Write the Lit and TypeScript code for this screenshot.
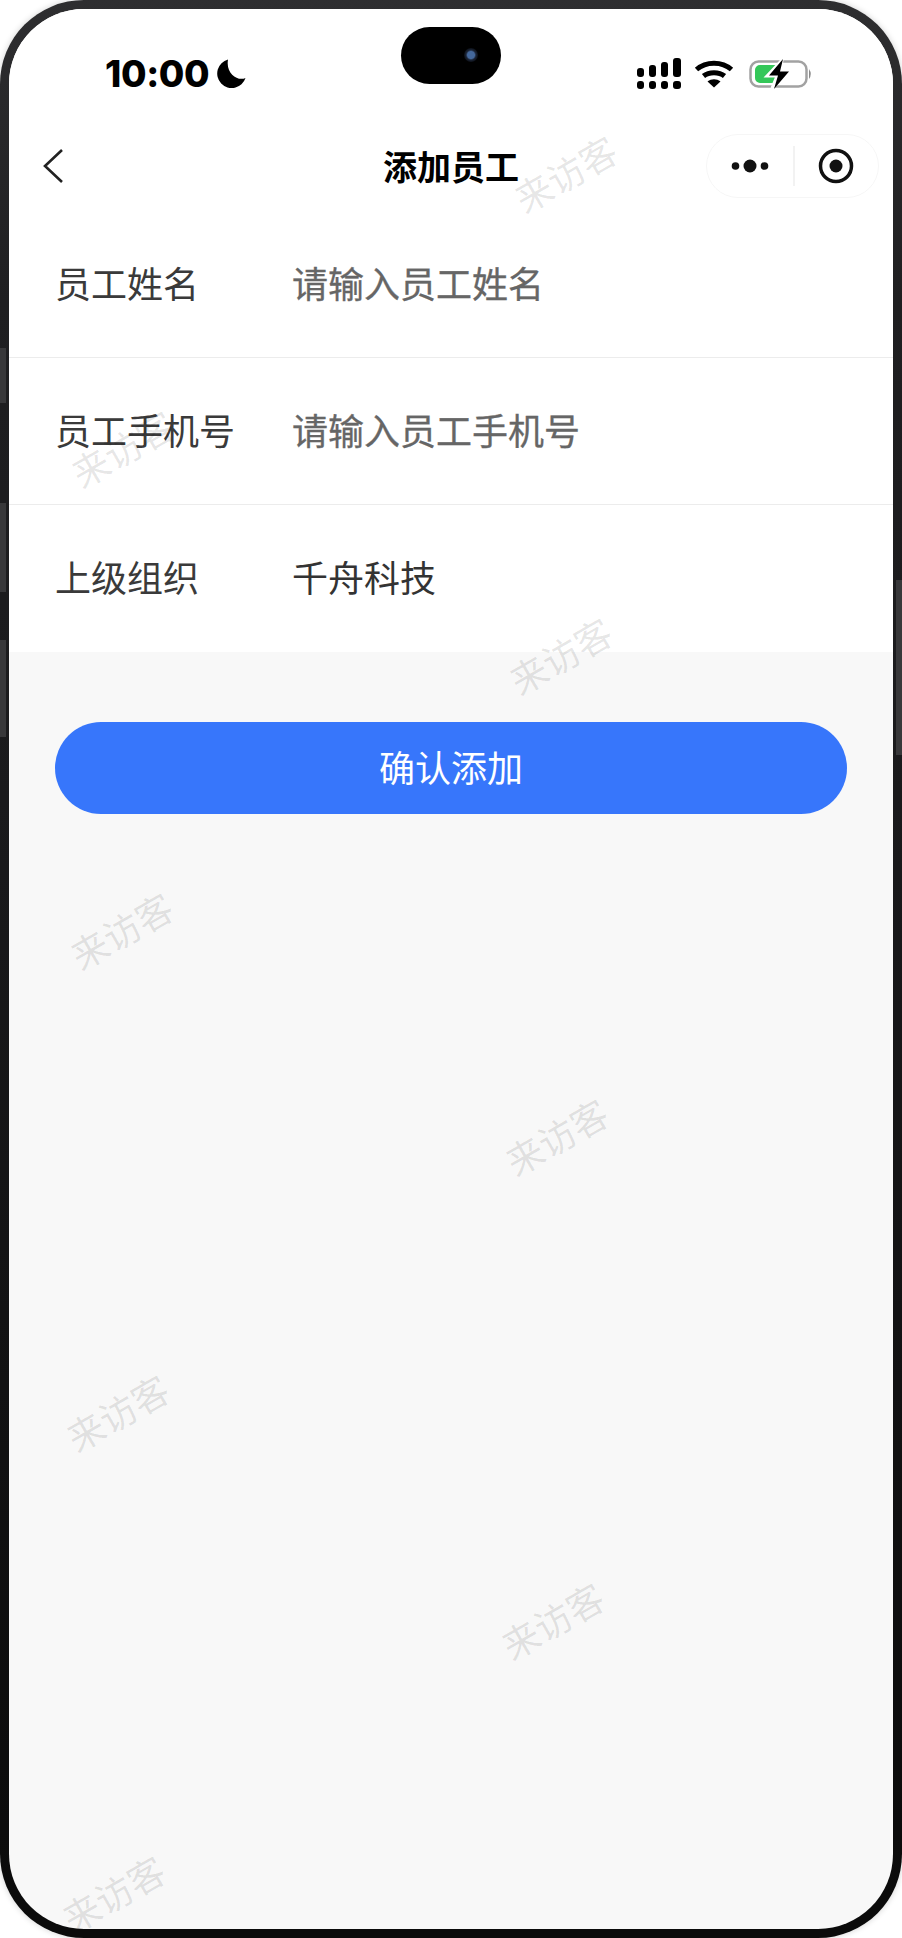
import { LitElement, html, css } from "lit";
import { customElement } from "lit/decorators.js";

const MARKS: [number, number][] = [
  [565, 173], [122, 448], [560, 655], [121, 930],
  [556, 1136], [117, 1412], [552, 1620], [113, 1893],
];

@customElement("app-root")
export class AppRoot extends LitElement {
  static styles = css`
    :host { display: block; width: 902px; height: 1938px; background: #fff; overflow: hidden;
      font-family: "Noto Sans CJK SC", "Liberation Sans", sans-serif; }
    .phone { box-sizing: border-box; height: 1938px; padding: 9px; border-radius: 84px;
      background: linear-gradient(#2e2e30 0, #1f1f21 300px, #1a1a1c 800px, #0b0b0b 1900px);
      box-shadow: 0 0 6px rgba(0,0,0,.18); position: relative; }
    .screen { height: 100%; border-radius: 75px; background: #f8f8f8; overflow: hidden; position: relative;
      display: flex; flex-direction: column; }
    .strip { position: absolute; width: 6px; background: #38383a; }
    .s1 { left: 0; top: 348px; height: 55px; }
    .s2 { left: 0; top: 503px; height: 89px; }
    .s3 { left: 0; top: 640px; height: 97px; }
    .s4 { right: 0; top: 580px; height: 175px; }
    .top { background: #fff; }
    .status { height: 112px; position: relative; display: flex; align-items: flex-start;
      justify-content: space-between; padding: 49px 78px 0 96px; box-sizing: border-box; }
    .left { display: flex; align-items: center; gap: 7px; }
    .time { font-family: Inter, "Liberation Sans", sans-serif; font-weight: 800; font-size: 37px;
      line-height: 30px; color: #000; letter-spacing: -.4px; padding-top: 1px; }
    .right { display: flex; align-items: center; }
    .wifi { margin: 0 15px 0 12px; }
    .island { position: absolute; left: 392px; top: 18px; width: 100px; height: 57px; border-radius: 28.5px;
      background: #000; }
    .cam { position: absolute; left: 63px; top: 21px; width: 14px; height: 14px; border-radius: 50%;
      background: radial-gradient(circle, #44689c 0 3.5px, #1b2436 5px, #0c1018 7px); }
    .nav { height: 90px; position: relative; display: flex; align-items: center; justify-content: center; }
    .back { position: absolute; left: 33px; top: 28px; }
    .title { font-size: 34px; font-weight: 700; color: #000; line-height: 46px; }
    .capsule { position: absolute; left: 697px; top: 13px; width: 173px; height: 64px; box-sizing: border-box;
      border: 1.5px solid #f6f6f6; border-radius: 32px; display: flex; align-items: center; }
    .capsule .more { width: 86px; display: flex; justify-content: center; }
    .capsule .sep { width: 1.5px; height: 40px; background: #f2f2f2; }
    .capsule .tgt { flex: 1; display: flex; justify-content: center; }
    .row { height: 147px; box-sizing: border-box; display: flex; align-items: center; padding: 0 0 5px 46px;
      border-bottom: 1.5px solid #ececec; font-size: 36px; color: #3a3a3a; }
    .row:last-child { border-bottom: 0; }
    .label { width: 237px; }
    .ph { color: #666; -webkit-text-stroke: .3px #666; }
    .val { color: #333; }
    .actions { padding: 70px 46px 0; }
    .btn { height: 92px; border-radius: 46px; background: #3776fb; color: #fff; font-size: 36px;
      box-sizing: border-box; padding-bottom: 4px;
      display: flex; align-items: center; justify-content: center; }
    .mark { position: absolute; width: 140px; margin: -25px 0 0 -70px; line-height: 50px; text-align: center;
      font-size: 37px; color: rgba(0,0,0,.1); transform: rotate(-30deg); white-space: nowrap; }
  `;

  render() {
    return html`<div class="phone">
      <i class="strip s1"></i><i class="strip s2"></i><i class="strip s3"></i><i class="strip s4"></i>
      <div class="screen">
        <div class="top">
          <div class="status">
            <div class="left">
              <span class="time">10:00</span>
              <svg width="30" height="30" viewBox="0 0 30 30"><path d="M12 .5 A14.500 14.500 0 1 0 29.500 19 C22 22.500 9.500 15 12 .5Z" fill="#000"/></svg>
            </div>
            <div class="right">
              <svg width="46" height="32" viewBox="0 0 46 32" fill="#000">
                <rect x="1" y="10" width="7" height="9" rx="3"/><rect x="13" y="7" width="7" height="12" rx="3"/>
                <rect x="25" y="4" width="7" height="15" rx="3"/><rect x="37" y="0" width="8" height="19" rx="3"/>
                <rect x="1" y="23" width="7" height="8" rx="3"/><rect x="13" y="23" width="7" height="8" rx="3"/>
                <rect x="25" y="23" width="7" height="8" rx="3"/><rect x="37" y="23" width="8" height="8" rx="3"/>
              </svg>
              <svg class="wifi" width="40" height="30" viewBox="0 0 40 30" fill="none" stroke="#000" stroke-width="5">
                <path d="M2.500 10.500 C12 2 28 2 37.500 10.500"/><path d="M9.500 17 C15 12.500 25 12.500 30.500 17"/>
                <path d="M13.500 22.500 L20 28.500 L26.500 22.500 C22.500 19.500 17.500 19.500 13.500 22.500Z" fill="#000" stroke="none"/>
              </svg>
              <svg width="66" height="32" viewBox="0 0 66 32">
                <rect x="1.500" y="3.500" width="56" height="25" rx="8" fill="none" stroke="#a2a2a2" stroke-width="2.500"/>
                <path d="M6 12 a5 5 0 0 1 5-5 H30 L22 18 H28 L24 25 H11 a5 5 0 0 1-5-5Z" fill="#34c759"/>
                <path d="M60 11 q3.500 5 0 10Z" fill="#8a8a8a"/>
                <path d="M33 2 L18 18 H28 L23 30 L42 13 H31.500Z" fill="#fff" stroke="#fff" stroke-width="3"/>
                <path d="M34 1 L20 17.500 H29 L25 31 L40 13.500 H31Z" fill="#000"/>
              </svg>
            </div>
            <div class="island"><div class="cam"></div></div>
          </div>
          <div class="nav">
            <svg class="back" width="24" height="36" viewBox="0 0 24 36" fill="none" stroke="#222" stroke-width="2.600">
              <path d="M20 1 L3 17 L20 33"/>
            </svg>
            <span class="title">添加员工</span>
            <div class="capsule">
              <div class="more">
                <svg width="42" height="16" viewBox="0 0 42 16" fill="#111">
                  <circle cx="6.500" cy="8" r="3.800"/><circle cx="21" cy="8" r="6.500"/><circle cx="35.500" cy="8" r="3.800"/>
                </svg>
              </div>
              <div class="sep"></div>
              <div class="tgt">
                <svg width="38" height="38" viewBox="0 0 38 38" fill="none">
                  <circle cx="19" cy="19" r="15.500" stroke="#111" stroke-width="3.500"/><circle cx="19" cy="19" r="6.500" fill="#111"/>
                </svg>
              </div>
            </div>
          </div>
          <div class="row"><span class="label">员工姓名</span><span class="ph">请输入员工姓名</span></div>
          <div class="row"><span class="label">员工手机号</span><span class="ph">请输入员工手机号</span></div>
          <div class="row"><span class="label">上级组织</span><span class="val">千舟科技</span></div>
        </div>
        <div class="actions"><div class="btn">确认添加</div></div>
        ${MARKS.map(([x, y]) => html`<div class="mark" style="left:${x - 9}px;top:${y - 9}px">来访客</div>`)}
      </div>
    </div>`;
  }
}
